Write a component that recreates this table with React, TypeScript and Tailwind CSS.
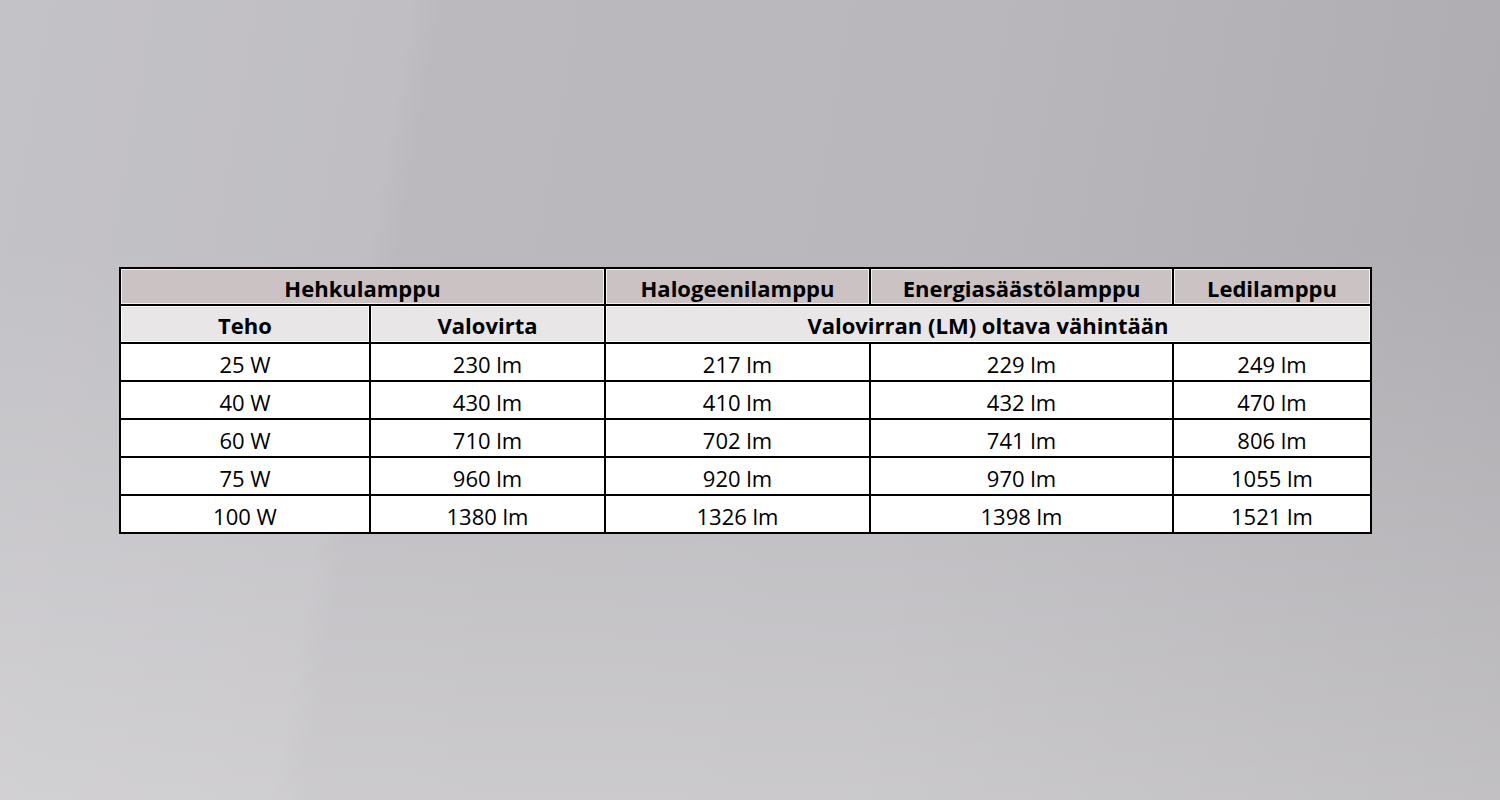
const rows = [
  ["25 W", "230 lm", "217 lm", "229 lm", "249 lm"],
  ["40 W", "430 lm", "410 lm", "432 lm", "470 lm"],
  ["60 W", "710 lm", "702 lm", "741 lm", "806 lm"],
  ["75 W", "960 lm", "920 lm", "970 lm", "1055 lm"],
  ["100 W", "1380 lm", "1326 lm", "1398 lm", "1521 lm"],
];

const head1 =
  "h-[37px] border-2 border-black bg-[#cbc2c3] font-bold pt-[3px] shadow-[inset_0_0_0_1px_#f4f0f0]";
const head2 =
  "h-[38px] border-2 border-black bg-[#e8e6e6] font-bold pt-[2px] shadow-[inset_0_0_0_1px_#ffffff]";
const cell = "h-[38px] border-2 border-black bg-white font-medium pt-[4px]";

export default function App() {
  return (
    <div className="w-[1500px] h-[800px] flex items-center pl-[119px] bg-[linear-gradient(100deg,#c3c2c6_0%,#c0bec2_25%,#bbb9bd_27%,#b9b7bb_60%,#adabaf_100%)]">
      <div className="absolute inset-0 w-[1500px] h-[800px] bg-[linear-gradient(180deg,rgba(255,255,255,0)_30%,rgba(255,255,255,0.25)_100%)] pointer-events-none" />
      <table
        className="relative table-fixed border-collapse text-center text-[22px] text-black leading-none"
        style={{ fontFamily: '"Open Sans", "Noto Sans", Arial, sans-serif' }}
      >
        <colgroup>
          <col className="w-[250px]" />
          <col className="w-[235px]" />
          <col className="w-[265px]" />
          <col className="w-[303px]" />
          <col className="w-[198px]" />
        </colgroup>
        <thead>
          <tr>
            <th colSpan={2} className={head1}>Hehkulamppu</th>
            <th className={head1}>Halogeenilamppu</th>
            <th className={head1}>Energiasäästölamppu</th>
            <th className={head1}>Ledilamppu</th>
          </tr>
          <tr>
            <th className={head2}>Teho</th>
            <th className={head2}>Valovirta</th>
            <th colSpan={3} className={head2}>Valovirran (LM) oltava vähintään</th>
          </tr>
        </thead>
        <tbody>
          {rows.map((r) => (
            <tr key={r[0]}>
              {r.map((v, i) => (
                <td key={i} className={cell}>{v}</td>
              ))}
            </tr>
          ))}
        </tbody>
      </table>
    </div>
  );
}
